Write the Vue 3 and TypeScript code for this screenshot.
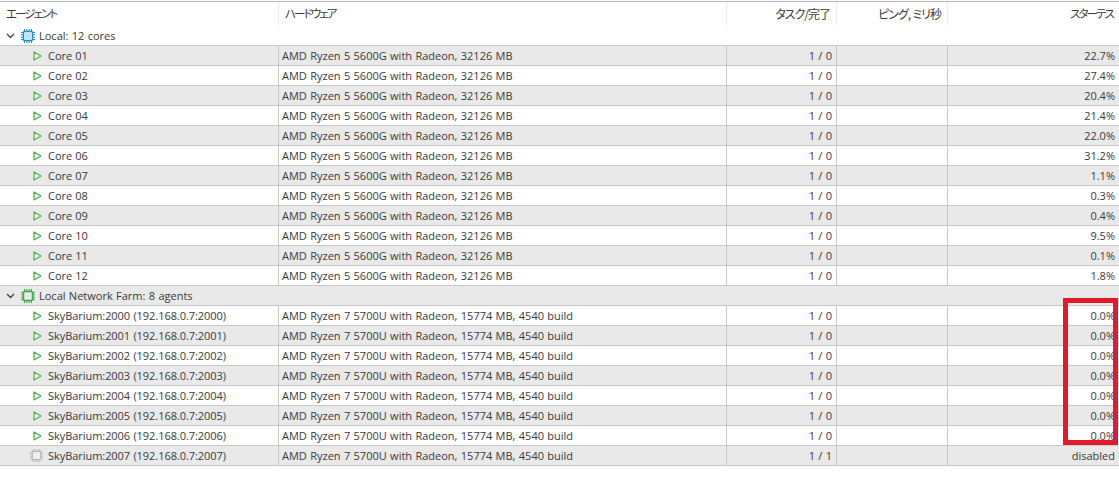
<script setup lang="ts">
interface Row {
  group?: boolean;
  icon: "play" | "chip-blue" | "chip-green" | "chip-off";
  name: string;
  hw?: string;
  tasks?: string;
  status?: string;
}

const ryzen5 = "AMD Ryzen 5 5600G with Radeon, 32126 MB";
const ryzen7 = "AMD Ryzen 7 5700U with Radeon, 15774 MB, 4540 build";

const coreLoads = ["22.7", "27.4", "20.4", "21.4", "22.0", "31.2", "1.1", "0.3", "0.4", "9.5", "0.1", "1.8"];

const rows: Row[] = [
  { group: true, icon: "chip-blue", name: "Local: 12 cores" },
  ...coreLoads.map((load, i): Row => ({
    icon: "play",
    name: "Core " + String(i + 1).padStart(2, "0"),
    hw: ryzen5,
    tasks: "1 / 0",
    status: load + "%",
  })),
  { group: true, icon: "chip-green", name: "Local Network Farm: 8 agents" },
  ...[0, 1, 2, 3, 4, 5, 6].map((i): Row => ({
    icon: "play",
    name: `SkyBarium:200${i} (192.168.0.7:200${i})`,
    hw: ryzen7,
    tasks: "1 / 0",
    status: "0.0%",
  })),
  {
    icon: "chip-off",
    name: "SkyBarium:2007 (192.168.0.7:2007)",
    hw: ryzen7,
    tasks: "1 / 1",
    status: "disabled",
  },
];

const pins = [0, 1, 2, 3];
</script>

<template>
  <div class="table">
    <div class="head">
      <div class="hcell tight">エージェント</div>
      <div class="hcell tight">ハードウェア</div>
      <div class="hcell right">タスク/完了</div>
      <div class="hcell right">ピング, ミリ秒</div>
      <div class="hcell right last tight">スターテス</div>
    </div>

    <div
      v-for="(row, i) in rows"
      :key="row.name"
      class="row"
      :class="{ odd: i % 2 === 1 }"
    >
      <template v-if="row.group">
        <div class="group">
          <svg class="chevron" width="9" height="6" viewBox="0 0 9 6">
            <path d="M1 1l3.5 3.5L8 1" fill="none" stroke="#444" stroke-width="1.3" />
          </svg>
          <svg class="chip" width="14" height="14" viewBox="0 0 14 14" :class="row.icon">
            <rect x="2.5" y="2.5" width="9" height="9" rx="1" fill="none" stroke="currentColor" stroke-width="1.4" />
            <rect v-if="row.icon === 'chip-blue'" x="4" y="4" width="6" height="6" fill="#bfe3f5" />
            <path
              v-for="p in pins"
              :key="p"
              :d="`M${3.5 + p * 2.33} 0v2M${3.5 + p * 2.33} 12v2M0 ${3.5 + p * 2.33}h2M12 ${3.5 + p * 2.33}h2`"
              stroke="currentColor"
              stroke-width="1"
            />
          </svg>
          <span>{{ row.name }}</span>
        </div>
      </template>
      <template v-else>
        <div class="cell name">
          <svg v-if="row.icon === 'play'" class="play" width="9" height="10" viewBox="0 0 9 10">
            <path d="M1 1v8l7-4z" fill="#fff" stroke="#45b04e" stroke-width="1.2" stroke-linejoin="round" />
          </svg>
          <svg v-else class="chip chip-off off" width="13" height="13" viewBox="0 0 14 14">
            <rect x="2.5" y="2.5" width="9" height="9" rx="1" fill="#efefef" stroke="currentColor" stroke-width="1.2" />
            <path
              v-for="p in pins"
              :key="p"
              :d="`M${3.5 + p * 2.33} 0v2M${3.5 + p * 2.33} 12v2M0 ${3.5 + p * 2.33}h2M12 ${3.5 + p * 2.33}h2`"
              stroke="currentColor"
              stroke-width="1"
            />
          </svg>
          <span>{{ row.name }}</span>
        </div>
        <div class="cell">{{ row.hw }}</div>
        <div class="cell right">{{ row.tasks }}</div>
        <div class="cell right"></div>
        <div class="cell right last">{{ row.status }}</div>
      </template>
    </div>

    <div class="highlight"></div>
  </div>
</template>

<style scoped>
.table {
  position: relative;
  width: 1119px;
  height: 495px;
  padding-top: 1px;
  box-sizing: border-box;
  background: #fff;
  color: #3a3a3a;
  font-family: "Open Sans", "Noto Sans CJK JP", sans-serif;
  font-size: 11px;
  word-spacing: 0.5px;
  overflow: hidden;
}
.head,
.row {
  display: grid;
  grid-template-columns: 279px 448px 110px 111px 171px;
}
.head {
  height: 25px;
  box-sizing: border-box;
  border-top: 1px solid #b4b4b4;
}
.hcell {
  height: 23px;
  line-height: 23px;
  padding: 0 6px;
  border-right: 1px solid #eaeaea;
  font-family: "Noto Sans CJK JP", sans-serif;
  font-size: 12px;
  font-weight: 400;
  font-feature-settings: "palt";
  letter-spacing: -1px;
}
.hcell.tight {
  font-size: 11.5px;
  letter-spacing: -1.9px;
}
.row {
  height: 20px;
  box-sizing: border-box;
  border-bottom: 1px solid #c8c8c8;
}
.row.odd {
  background: #e9e9e9;
}
.group {
  grid-column: 1 / -1;
  display: flex;
  align-items: center;
  line-height: 19px;
  padding-left: 6px;
}
.chevron {
  margin-right: 6px;
}
.chip {
  margin-right: 4px;
}
.chip-blue {
  color: #1c8fc8;
}
.chip-green {
  color: #37a845;
}
.chip-off {
  color: #b5b5b5;
}
.cell {
  line-height: 19px;
  padding: 0 4px 0 3px;
  border-right: 1px solid #c8c8c8;
  white-space: nowrap;
  overflow: hidden;
}
.name {
  display: flex;
  align-items: center;
  padding-left: 33px;
  letter-spacing: -0.05px;
}
.play {
  margin-right: 6px;
}
.off {
  margin-left: -3px;
  margin-right: 5px;
}
.right {
  text-align: right;
}
.last {
  border-right: none;
}
.highlight {
  position: absolute;
  left: 1063px;
  top: 298px;
  width: 55px;
  height: 147px;
  box-sizing: border-box;
  border: 5px solid #e01b2b;
}
</style>

<style>
html,
body {
  margin: 0;
  background: #fff;
}
</style>
